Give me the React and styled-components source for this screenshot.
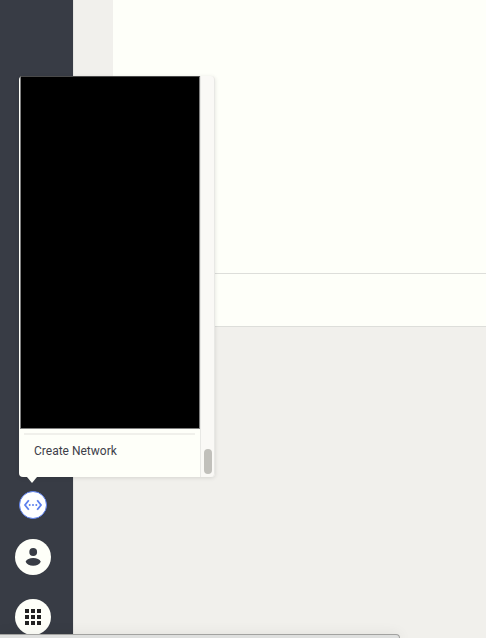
import React from "react";
import styled, { createGlobalStyle } from "styled-components";

const color = {
  rail: "#383c45",
  canvas: "#f1f0ec",
  paper: "#fefff9",
  line: "#dddeda",
  track: "#faf9f6",
  thumb: "#c1c0bb",
  text: "#3d4049",
  accent: "#5b7fee",
};

const GlobalStyle = createGlobalStyle`
  *, *::before, *::after { box-sizing: border-box; }
  body {
    margin: 0;
    overflow: hidden;
    background: ${color.canvas};
    font-family: Roboto, "Liberation Sans", sans-serif;
  }
`;

const Page = styled.div`
  display: flex;
  min-height: 100vh;
`;

const Rail = styled.nav`
  display: flex;
  flex: none;
  flex-direction: column;
  justify-content: flex-end;
  align-items: center;
  gap: 20px;
  width: 73px;
  padding: 0 7px 3px 0;
  background: ${color.rail};
`;

const Main = styled.main`
  flex: 1;
  min-width: 0;
  padding-left: 39px;
  border-left: 1px solid #e5e5e1;
`;

const Sheet = styled.section`
  height: 274px;
  background: ${color.paper};
  border-bottom: 1px solid ${color.line};
`;

const SheetFooter = styled.footer`
  height: 53px;
  background: ${color.paper};
  border-bottom: 1px solid ${color.line};
`;

const RoundButton = styled.button`
  display: grid;
  place-items: center;
  width: ${(p) => p.$size}px;
  height: ${(p) => p.$size}px;
  margin: ${(p) => (p.$spaced ? "4px 0 0" : "0")};
  padding: 0;
  border: ${(p) => (p.$outlined ? `1px solid ${color.accent}` : "0")};
  border-radius: 50%;
  background: ${(p) => (p.$outlined ? "#ffffff" : color.paper)};
  color: ${(p) => (p.$outlined ? color.accent : color.rail)};
  cursor: pointer;

  svg { display: block; }
`;

const MenuAnchor = styled.div`
  position: relative;
`;

const Popover = styled.div`
  position: absolute;
  z-index: 2;
  left: 0;
  bottom: calc(100% + 14px);
  display: flex;
  width: 196px;
  border-radius: 4px;
  background: ${color.paper};
  box-shadow: 0 1px 4px rgba(0, 0, 0, 0.12);

  &::after {
    content: "";
    position: absolute;
    top: 100%;
    left: 8px;
    border: 5px solid transparent;
    border-top: 6px solid ${color.paper};
    border-bottom: 0;
  }
`;

const MenuBody = styled.div`
  flex: 1;
  min-width: 0;
  padding-left: 1px;
`;

const NetworkList = styled.div`
  height: 353px;
  border: 1px solid #808080;
  border-top-color: #4a4a4a;
  background: #000000;
`;

const Divider = styled.hr`
  height: 2px;
  margin: 4px 5px 0 4px;
  border: 0;
  background: #f0f0eb;
`;

const MenuItem = styled.button`
  display: block;
  width: 100%;
  height: 42px;
  padding: 0 14px 10px;
  border: 0;
  background: transparent;
  color: ${color.text};
  font: 400 12px/16px Roboto, "Liberation Sans", sans-serif;
  text-align: left;
  cursor: pointer;
`;

const ScrollTrack = styled.div`
  display: flex;
  flex-direction: column;
  justify-content: flex-end;
  align-items: center;
  width: 15px;
  padding-bottom: 3px;
  border: 1px solid #e8e8e5;
  border-width: 0 1px;
  border-radius: 0 4px 4px 0;
  background: ${color.track};
`;

const ScrollThumb = styled.div`
  width: 8px;
  height: 25px;
  border-radius: 4px;
  background: ${color.thumb};
`;

const WindowEdge = styled.div`
  position: fixed;
  z-index: 3;
  left: 0;
  right: 86px;
  bottom: 0;
  height: 4px;
  border-top: 1px solid #a2a2a0;
  border-right: 1px solid #a2a2a0;
  border-radius: 0 4px 0 0;
  background: #dedfde;
  box-shadow: 0 2px 14px rgba(0, 0, 0, 0.16);
`;

function NetworkIcon() {
  return (
    <svg width="20" height="12" viewBox="0 0 20 12" fill="none" aria-hidden="true">
      <path d="M5.8 1.2 2 6l3.8 4.8M14.2 1.2 18 6l-3.8 4.8" stroke="currentColor" strokeWidth="1.8" />
      <g fill="currentColor">
        <circle cx="6.7" cy="6" r="1" />
        <circle cx="10" cy="6" r="1" />
        <circle cx="13.3" cy="6" r="1" />
      </g>
    </svg>
  );
}

function PersonIcon() {
  return (
    <svg width="16" height="18" viewBox="0 0 16 18" fill="currentColor" aria-hidden="true">
      <circle cx="8.2" cy="4" r="3.9" />
      <path d="M.6 13.8C1.7 11.4 4.5 10.1 8.2 10.1s6.5 1.3 7.6 3.7c-1.3 2.5-4 4-7.6 4s-6.3-1.5-7.6-4Z" />
    </svg>
  );
}

function AppsIcon() {
  const steps = [0, 6, 12];
  return (
    <svg width="16" height="16" viewBox="0 0 16 16" fill="#222222" aria-hidden="true">
      {steps.map((y) => steps.map((x) => <rect key={`${x}-${y}`} x={x} y={y} width="4" height="4" />))}
    </svg>
  );
}

export default function App() {
  return (
    <>
      <GlobalStyle />
      <Page>
        <Rail aria-label="Primary">
          <MenuAnchor>
            <Popover>
              <MenuBody>
                <NetworkList />
                <Divider />
                <MenuItem type="button">Create Network</MenuItem>
              </MenuBody>
              <ScrollTrack>
                <ScrollThumb />
              </ScrollTrack>
            </Popover>
            <RoundButton type="button" $size={28} $outlined aria-label="Networks">
              <NetworkIcon />
            </RoundButton>
          </MenuAnchor>
          <RoundButton type="button" $size={36} aria-label="Account">
            <PersonIcon />
          </RoundButton>
          <RoundButton type="button" $size={36} $spaced aria-label="Apps">
            <AppsIcon />
          </RoundButton>
        </Rail>
        <Main>
          <Sheet />
          <SheetFooter />
        </Main>
      </Page>
      <WindowEdge />
    </>
  );
}
